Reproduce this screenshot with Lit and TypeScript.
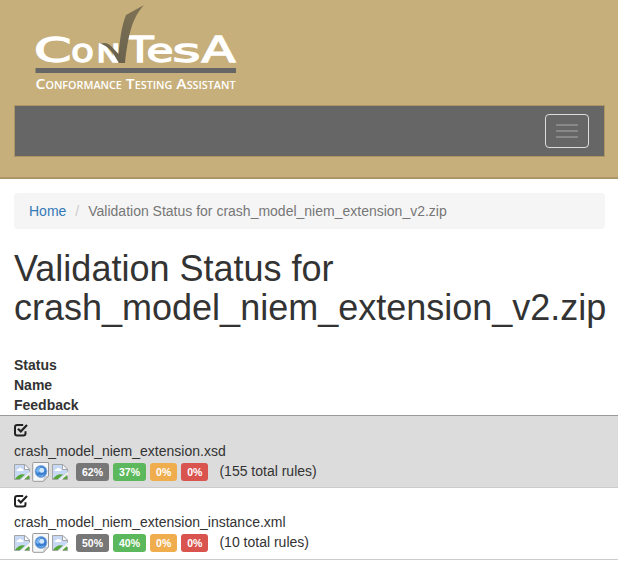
import { LitElement, html, css, svg } from "lit";
import { customElement } from "lit/decorators.js";

interface ResultRow {
  name: string;
  percents: number[];
  total: number;
}

const rows: ResultRow[] = [
  { name: "crash_model_niem_extension.xsd", percents: [62, 37, 0, 0], total: 155 },
  { name: "crash_model_niem_extension_instance.xml", percents: [50, 40, 0, 0], total: 10 },
];
const tones = ["neutral", "pass", "warn", "fail"];

// character, left edge, advance width, font size
const letters: [string, number, number, number][] = [
  ["C", 34, 37.5, 34], ["o", 71, 23, 32], ["N", 96.5, 24, 24], ["T", 126.5, 27, 35],
  ["e", 146.5, 27, 32], ["s", 172.5, 28, 32], ["A", 201.5, 34, 35],
];

@customElement("app-root")
export class AppRoot extends LitElement {
  static styles = css`
    :host {
      display: block;
      font: 14px/20px "Liberation Sans", Arial, sans-serif;
      color: #333;
      background: #fff;
      min-height: 576px;
    }
    * { box-sizing: border-box; }
    header {
      height: 179px;
      background: #c7af7b;
      border-bottom: 2px solid #ad9665;
      padding: 0 13px 0 14px;
    }
    .logo { display: block; width: 230px; height: 105px; }
    .mark { font-family: "DejaVu Sans", sans-serif; fill: #fff; stroke: #fff; stroke-width: 1.3px; }
    .tagline { font-family: "Open Sans", sans-serif; font-size: 14.5px; font-weight: 600; font-variant: small-caps; fill: #fff; }
    nav {
      height: 52px;
      background: #666;
      border: 1px solid #ad9665;
      display: flex;
      align-items: center;
      justify-content: flex-end;
      padding-right: 15px;
    }
    .toggle {
      width: 44px;
      height: 34px;
      padding: 0;
      border: 1px solid #ddd;
      border-radius: 4px;
      background: transparent;
      display: flex;
      flex-direction: column;
      align-items: center;
      justify-content: center;
      gap: 4px;
    }
    .bar { width: 22px; height: 2px; background: #888; }
    .crumbs {
      margin: 14px 13px 20px 14px;
      padding: 8px 15px;
      height: 36px;
      border-radius: 4px;
      background: #f5f5f5;
      color: #777;
    }
    .crumbs a { color: #337ab7; text-decoration: none; }
    .slash { color: #ccc; padding: 0 5px 0 9px; margin-right: 4px; }
    h1 { margin: 0 0 0 14px; font-size: 36px; line-height: 39px; font-weight: 500; }
    .head { margin-top: 28px; padding-left: 14px; font-weight: 700; }
    .row { height: 72px; padding: 4px 14px 0; border-bottom: 1px solid #ccc; }
    .row.shaded { height: 73px; padding-top: 5px; background: #dcdcdc; border-top: 1px solid #999; }
    .status { height: 20px; padding-top: 2px; }
    .status svg { display: block; }
    .feedback { display: flex; align-items: center; height: 20px; }
    .feedback svg { flex: none; }
    .broken { margin-top: 2px; }
    .file { margin: 1px 2px 0; }
    .badges { display: flex; gap: 4px; margin: 1px 11px 0 8px; }
    .badge {
      height: 18px;
      border-radius: 3px;
      padding: 0 6px;
      color: #fff;
      font-size: 10.5px;
      line-height: 18px;
      font-weight: 700;
    }
    .neutral { background: #777; }
    .pass { background: #5cb85c; }
    .warn { background: #f0ad4e; }
    .fail { background: #d9534f; }
  `;

  private logo() {
    return html`<svg class="logo" viewBox="14 0 230 105" role="img" aria-label="ConTesA">
      <defs>
        <linearGradient id="tick" x1="0" y1="1" x2="0.4" y2="0">
          <stop offset="0" stop-color="#665f4d" /><stop offset="1" stop-color="#7c7053" />
        </linearGradient>
      </defs>
      <g class="mark">
        ${letters.map(([c, x, w, s]) => svg`<text x=${x} y="61.5" font-size=${s} textLength=${w} lengthAdjust="spacingAndGlyphs">${c}</text>`)}
      </g>
      <path fill="url(#tick)" d="M100 43.5Q107 41.5 111 46L118.5 54C120 40 121 28 126 15L144 5C133 17 128.5 32 125 63H119C113 53 109 46 100 43.5Z" />
      <rect x="35.5" y="68" width="200.5" height="5" fill="#666" />
      <text class="tagline" x="35.5" y="88.8" textLength="200" lengthAdjust="spacingAndGlyphs">Conformance Testing Assistant</text>
    </svg>`;
  }

  private check() {
    return html`<svg width="14" height="14" viewBox="0 0 14 14" fill="none" stroke="#222">
      <path stroke-width="2" d="M9.2 2H3.2Q1 2 1 4.2V10.3Q1 12.5 3.2 12.5H9.3Q11.5 12.5 11.5 10.3V8.2" />
      <path stroke-width="2.2" d="M4 5.7L6.8 8.5L13 2" />
    </svg>`;
  }

  private broken() {
    return html`<svg class="broken" width="16" height="16" viewBox="0 0 16 16">
      <path fill="#c6d8f3" d="M.5.5H11L15.5 5V8L7 15.5H.5Z" />
      <path fill="#fff" d="M2.5 7Q2.5 5 4.5 5Q5.5 3 7.5 4.5Q9.5 4 9.5 7Z" />
      <path fill="#55a638" d="M1 15Q5 9 11 10.5L6 15ZM10.5 15L15 11V15Z" />
      <path fill="#fff" d="M10.5 1L15 5.5H10.5Z" />
      <path fill="none" stroke="#a5a5a5" d="M6 15.5H.5V.5H11L15.5 5V7.5M10.5 1V5.5H15M15.5 12V15.5H10.5" />
      <path stroke="#f4f4f4" stroke-width="1.3" d="M8 16L16 9" />
    </svg>`;
  }

  private file() {
    return html`<svg class="file" width="18" height="20" viewBox="0 0 18 20">
      <path fill="#f6f7f8" stroke="#999" d="M1.5.5H16.5V14L11.5 19.3H1.5Q.7 19.3 .7 18V1.5Q.7.5 1.5.5Z" />
      <path fill="#dcdedf" stroke="#aaa" stroke-width=".6" d="M11.5 18.8L12.5 15L16.5 14Z" />
      <circle cx="9" cy="9.5" r="5.9" fill="#3b7fd0" stroke="#7fa5d8" stroke-width=".8" />
      <path fill="#78b4ef" d="M4.2 8Q6 4.5 9 4.5L7 7L7.5 9.5L6 11L4.3 10Z" />
      <circle cx="9.7" cy="8.3" r="2.5" fill="#cfe7fc" />
      <path fill="#79b3ec" d="M5.5 12.5Q9 14.5 12.5 12L11 14Q8 15.5 5.5 12.5Z" />
    </svg>`;
  }

  render() {
    return html`
      <header>
        ${this.logo()}
        <nav>
          <button class="toggle" aria-label="Toggle navigation">
            <span class="bar"></span><span class="bar"></span><span class="bar"></span>
          </button>
        </nav>
      </header>
      <div class="crumbs"><a href="#">Home</a><span class="slash">/</span>Validation Status for crash_model_niem_extension_v2.zip</div>
      <h1>Validation Status for<br />crash_model_niem_extension_v2.zip</h1>
      <div class="head"><div>Status</div><div>Name</div><div>Feedback</div></div>
      ${rows.map((r, i) => html`
        <div class="row ${i === 0 ? "shaded" : ""}">
          <div class="status">${this.check()}</div>
          <div>${r.name}</div>
          <div class="feedback">
            ${this.broken()}${this.file()}${this.broken()}
            <div class="badges">${r.percents.map((p, k) => html`<span class="badge ${tones[k]}">${p}%</span>`)}</div>
            <span>(${r.total} total rules)</span>
          </div>
        </div>`)}
    `;
  }
}
